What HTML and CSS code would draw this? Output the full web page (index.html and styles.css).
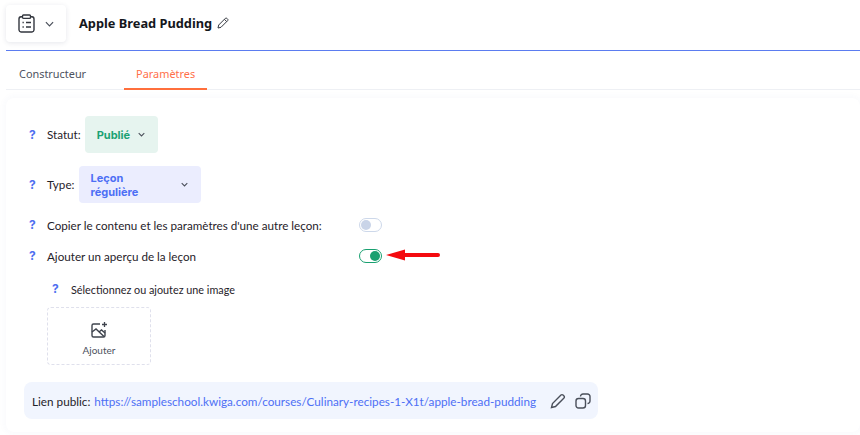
FILE: index.html
```html
<!DOCTYPE html>
<html lang="fr">
<head>
<meta charset="utf-8">
<title>Apple Bread Pudding</title>
<link rel="stylesheet" href="styles.css">
</head>
<body>
<div class="page">
  <header class="top">
    <button class="menu-btn">
      <svg class="clip" viewBox="0 0 17 19" width="17" height="19" fill="none" stroke="#33373f" stroke-width="1.4"><path d="M4.500 2.800H3A2.200 2.200 0 0 0 1 5v11a2.200 2.200 0 0 0 2 2h11a2.200 2.200 0 0 0 2-2V5a2.200 2.200 0 0 0-2-2.200H12.500"/><rect x="4.500" y="1" width="8" height="3.400" rx="1"/><path d="M4.500 8.500h1.300M8 8.500h5M4.500 13h1.300M8 13h5"/></svg>
      <svg class="chev" viewBox="0 0 10 6" width="9" height="6" fill="none" stroke="#4a4f5a" stroke-width="1.3"><path d="M1 1l4 4 4-4"/></svg>
    </button>
    <h1 class="title">Apple Bread Pudding</h1>
    <svg class="pencil" viewBox="0 0 12 12" width="12" height="12" fill="none" stroke="#33373f" stroke-width="1"><path d="M1 11l.7-3L8.400 1.300a1 1 0 0 1 1.400 0l.9.9a1 1 0 0 1 0 1.400L4 10.300z M7.400 2.300l2.300 2.300"/></svg>
  </header>
  <nav class="tabs">
    <a class="tab">Constructeur</a>
    <a class="tab active">Paramètres</a>
  </nav>
  <main class="card">
    <div class="row row-statut">
      <span class="q">?</span>
      <span class="lbl">Statut:</span>
      <div class="select green"><span>Publié</span><svg viewBox="0 0 10 6" width="7" height="5" fill="none" stroke="#4a4f5a" stroke-width="1.5"><path d="M1 1l4 4 4-4"/></svg></div>
    </div>
    <div class="row row-type">
      <span class="q">?</span>
      <span class="lbl">Type:</span>
      <div class="select blue"><span>Leçon régulière</span><svg viewBox="0 0 10 6" width="7" height="5" fill="none" stroke="#4a4f5a" stroke-width="1.5"><path d="M1 1l4 4 4-4"/></svg></div>
    </div>
    <div class="row row-toggle r1">
      <span class="q">?</span>
      <span class="lbl wide">Copier le contenu et les paramètres d'une autre leçon:</span>
      <span class="toggle off"><i></i></span>
    </div>
    <div class="row row-toggle r2">
      <span class="q">?</span>
      <span class="lbl wide">Ajouter un aperçu de la leçon</span>
      <span class="toggle on"><i></i></span>
      <svg class="arrow" viewBox="0 0 56 12" width="56" height="12"><path d="M1 6L20 .5V4H53a2 2 0 0 1 0 4H20V11.500z" fill="#f40a0f"/></svg>
    </div>
    <div class="row row-sub">
      <span class="q">?</span>
      <span class="lbl sm">Sélectionnez ou ajoutez une image</span>
    </div>
    <div class="upload">
      <svg viewBox="0 0 18 18" width="18" height="18" fill="none" stroke="#3f444e" stroke-width="1.4"><path d="M10 3H3.500A1.500 1.500 0 0 0 2 4.500v10A1.500 1.500 0 0 0 3.500 16h10a1.500 1.500 0 0 0 1.500-1.500V9"/><path d="M2 11l4-3 8 7.500M9 11l2.500-2 3.500 3"/><path d="M14.500 1v5M12 3.500h5" stroke-width="1.300"/></svg>
      <span>Ajouter</span>
    </div>
    <div class="link-bar">
      <span class="link-label">Lien public:</span>
      <a class="link">https://sampleschool.kwiga.com/courses/Culinary-recipes-1-X1t/apple-bread-pudding</a>
      <svg class="act" viewBox="0 0 16 16" width="16" height="16" fill="none" stroke="#4a4f5a" stroke-width="1.400"><path d="M1.500 14.500l1-4L11 2a1.400 1.400 0 0 1 2 0l1 1a1.400 1.400 0 0 1 0 2l-8.500 8.500z"/></svg>
      <svg class="act" viewBox="0 0 16 16" width="16" height="16" fill="none" stroke="#4a4f5a" stroke-width="1.400"><rect x="1" y="5.500" width="9.500" height="9.500" rx="2.500"/><path d="M5.500 3.500A2.500 2.500 0 0 1 8 1h4.500A2.500 2.500 0 0 1 15 3.500V8a2.500 2.500 0 0 1-2.500 2.500"/></svg>
    </div>
  </main>
</div>
</body>
</html>
```
FILE: styles.css
```css
* { box-sizing: border-box; }
html, body { margin: 0; padding: 0; }
body { width: 860px; height: 435px; overflow: hidden; background: #fff; font-family: "Lato", "Liberation Sans", sans-serif; color: #1f2229; }
.page { padding-left: 6px; }
.top { height: 51px; display: flex; align-items: flex-start; border-bottom: 1px solid #5b7cf0; }
.menu-btn { margin-top: 5px; width: 60px; height: 37px; border: 0; border-radius: 4px; background: #fff; box-shadow: 0 1px 5px rgba(40,50,90,.12); display: flex; align-items: center; padding: 0 0 0 12px; gap: 10px; }
.title { margin: 15px 0 0 13px; font: 700 12.800px/16px "Noto Sans", sans-serif; color: #15171c; }
.pencil { margin: 17px 0 0 5px; }
.tabs { display: flex; height: 39px; border-bottom: 1px solid #eef0f4; padding-left: 1px; }
.tab { height: 39px; font: 400 10.900px/1 "Noto Sans", sans-serif; color: #4d5260; padding: 18px 12px 0; margin-right: 26px; }
.tab.active { color: #ff6f4a; border-bottom: 2px solid #ff6f3c; margin-right: 0; }
.card { margin-top: 8px; padding: 18px 0 0 20px; height: 334px; background: #fff; box-shadow: 0 0 8px rgba(60,80,160,.05); border-radius: 8px; }
.row { display: flex; align-items: center; font-size: 11.650px; }
.q { width: 18px; padding-left: 3px; color: #4f6ff0; font: 700 12px/1 "Inter", sans-serif; flex: none; }
.lbl { color: #1f2229; }
.row-statut { height: 37px; }
.row .lbl { margin-left: 3px; }
.select { display: flex; align-items: center; border-radius: 4px; font: 700 11px/14px "Inter", sans-serif; }
.select svg { flex: none; }
.green { margin-left: 4px; width: 73px; height: 37px; background: #e6f4ef; color: #1ba274; padding-left: 12px; gap: 8px; }
.row-type { margin-top: 13px; height: 37px; }
.blue { margin-left: 5px; width: 122px; height: 37px; background: #ebedfe; color: #4d6ff5; padding: 0 13px 0 11px; justify-content: space-between; }
.blue span { width: 60px; }
.row-toggle { height: 22px; }
.r1 { margin-top: 11px; }
.r2 { margin-top: 9px; }
.wide { width: 312px; }
.toggle { width: 23px; height: 14px; border-radius: 8px; border: 1px solid; display: flex; align-items: center; padding: 1px; flex: none; }
.toggle i { width: 10px; height: 10px; border-radius: 50%; }
.off { border-color: #cdd8ea; }
.off i { background: #c9d4e8; }
.on { border-color: #19a070; justify-content: flex-end; }
.on i { background: #19a070; }
.arrow { margin: 0 0 3px 3px; }
.row-sub { height: 18px; margin-top: 13px; padding-left: 23px; }
.row .lbl.sm { font-size: 10.800px; margin-left: 4px; }
.upload { margin: 9px 0 0 21px; width: 104px; height: 58px; border: 1px dashed #dfe0ec; border-radius: 4px; display: flex; flex-direction: column; align-items: center; padding-top: 13px; gap: 5px; font-size: 10px; color: #4d5260; }
.link-bar { margin: 17px 0 0 -2px; width: 574px; height: 37px; background: #f1f5fe; border-radius: 8px; display: flex; align-items: center; padding-left: 8px; font-size: 11.720px; white-space: nowrap; }
.link-label { color: #1f2229; margin-right: 4px; }
.link { color: #4d6ff5; margin-right: 14px; }
.act { margin-right: 9px; flex: none; }
```
